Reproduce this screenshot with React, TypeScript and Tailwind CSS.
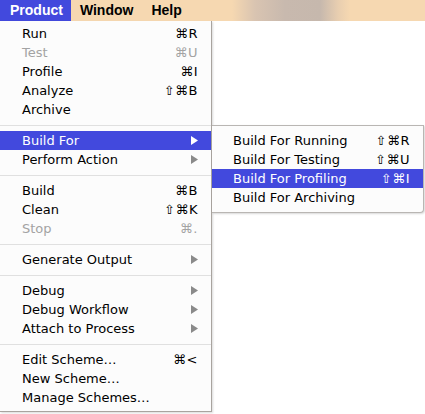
import type { ReactNode } from 'react';

type Item =
  | { kind: 'sep' }
  | {
      kind?: 'item';
      label: string;
      shortcut?: string;
      disabled?: boolean;
      submenu?: boolean;
      active?: boolean;
    };

const productMenu: Item[] = [
  { label: 'Run', shortcut: '⌘R' },
  { label: 'Test', shortcut: '⌘U', disabled: true },
  { label: 'Profile', shortcut: '⌘I' },
  { label: 'Analyze', shortcut: '⇧⌘B' },
  { label: 'Archive' },
  { kind: 'sep' },
  { label: 'Build For', submenu: true, active: true },
  { label: 'Perform Action', submenu: true },
  { kind: 'sep' },
  { label: 'Build', shortcut: '⌘B' },
  { label: 'Clean', shortcut: '⇧⌘K' },
  { label: 'Stop', shortcut: '⌘.', disabled: true },
  { kind: 'sep' },
  { label: 'Generate Output', submenu: true },
  { kind: 'sep' },
  { label: 'Debug', submenu: true },
  { label: 'Debug Workflow', submenu: true },
  { label: 'Attach to Process', submenu: true },
  { kind: 'sep' },
  { label: 'Edit Scheme…', shortcut: '⌘<' },
  { label: 'New Scheme…' },
  { label: 'Manage Schemes…' },
];

const buildForMenu: Item[] = [
  { label: 'Build For Running', shortcut: '⇧⌘R' },
  { label: 'Build For Testing', shortcut: '⇧⌘U' },
  { label: 'Build For Profiling', shortcut: '⇧⌘I', active: true },
  { label: 'Build For Archiving' },
];

function Arrow({ active }: { active?: boolean }) {
  return (
    <svg width="7" height="9" viewBox="0 0 7 9" className="shrink-0">
      <path d="M0 0 L7 4.5 L0 9 Z" fill={active ? '#ffffff' : '#8a8a8a'} />
    </svg>
  );
}

function MenuRows({ items, textPad }: { items: Item[]; textPad: string }) {
  return (
    <>
      {items.map((item, i) => {
        if (item.kind === 'sep') {
          return (
            <div key={i} className="h-[12px] flex items-center">
              <div className="h-px w-full bg-[#e0e0e0]" />
            </div>
          );
        }
        const color = item.active
          ? 'bg-[#4249dd] text-white'
          : item.disabled
            ? 'text-[#a3a3a3]'
            : 'text-black';
        return (
          <div key={i} className={`h-[19px] flex items-center justify-between pr-[13px] ${textPad} ${color}`}>
            <span>{item.label}</span>
            {item.shortcut && <span className="tracking-[0.5px]">{item.shortcut}</span>}
            {item.submenu && <Arrow active={item.active} />}
          </div>
        );
      })}
    </>
  );
}

function BarItem({ children, active }: { children: ReactNode; active?: boolean }) {
  return (
    <div
      className={
        active
          ? 'h-full flex items-center pl-[10px] pr-[8px] bg-[#4249dd] text-white'
          : 'h-full flex items-center px-[9px] text-black'
      }
    >
      {children}
    </div>
  );
}

export default function App() {
  return (
    <div
      className="w-[425px] h-[414px] bg-white overflow-hidden text-[13px] leading-[19px]"
      style={{ fontFamily: '"DejaVu Sans", Verdana, sans-serif' }}
    >
      <div
        className="h-[21px] flex items-stretch font-bold text-[14px] bg-[linear-gradient(90deg,#f6d8b1_0px,#f6d8b1_232px,#d9c4b1_255px,#c8b9ae_285px,#c6b8ad_320px,#e8ceb0_338px,#f6d8b1_350px)]"
        style={{ fontFamily: '"Liberation Sans", Arial, sans-serif' }}
      >
        <BarItem active>Product</BarItem>
        <BarItem>Window</BarItem>
        <BarItem>Help</BarItem>
      </div>

      <div className="flex items-start">
        <div className="w-[212px] bg-[#fcfcfc] border-r border-b border-[#a9a49f] pt-[3px] pb-[4px] shadow-[1px_1px_2px_rgba(0,0,0,0.15)]">
          <MenuRows items={productMenu} textPad="pl-[22px]" />
        </div>
        <div className="mt-[104px] w-[212px] bg-[#fcfcfc] border border-l-0 border-[#b9b6b3] rounded-br-[4px] pt-[5px] pb-[5px] shadow-[1px_1px_2px_rgba(0,0,0,0.15)]">
          <MenuRows items={buildForMenu} textPad="pl-[21px]" />
        </div>
      </div>
    </div>
  );
}
